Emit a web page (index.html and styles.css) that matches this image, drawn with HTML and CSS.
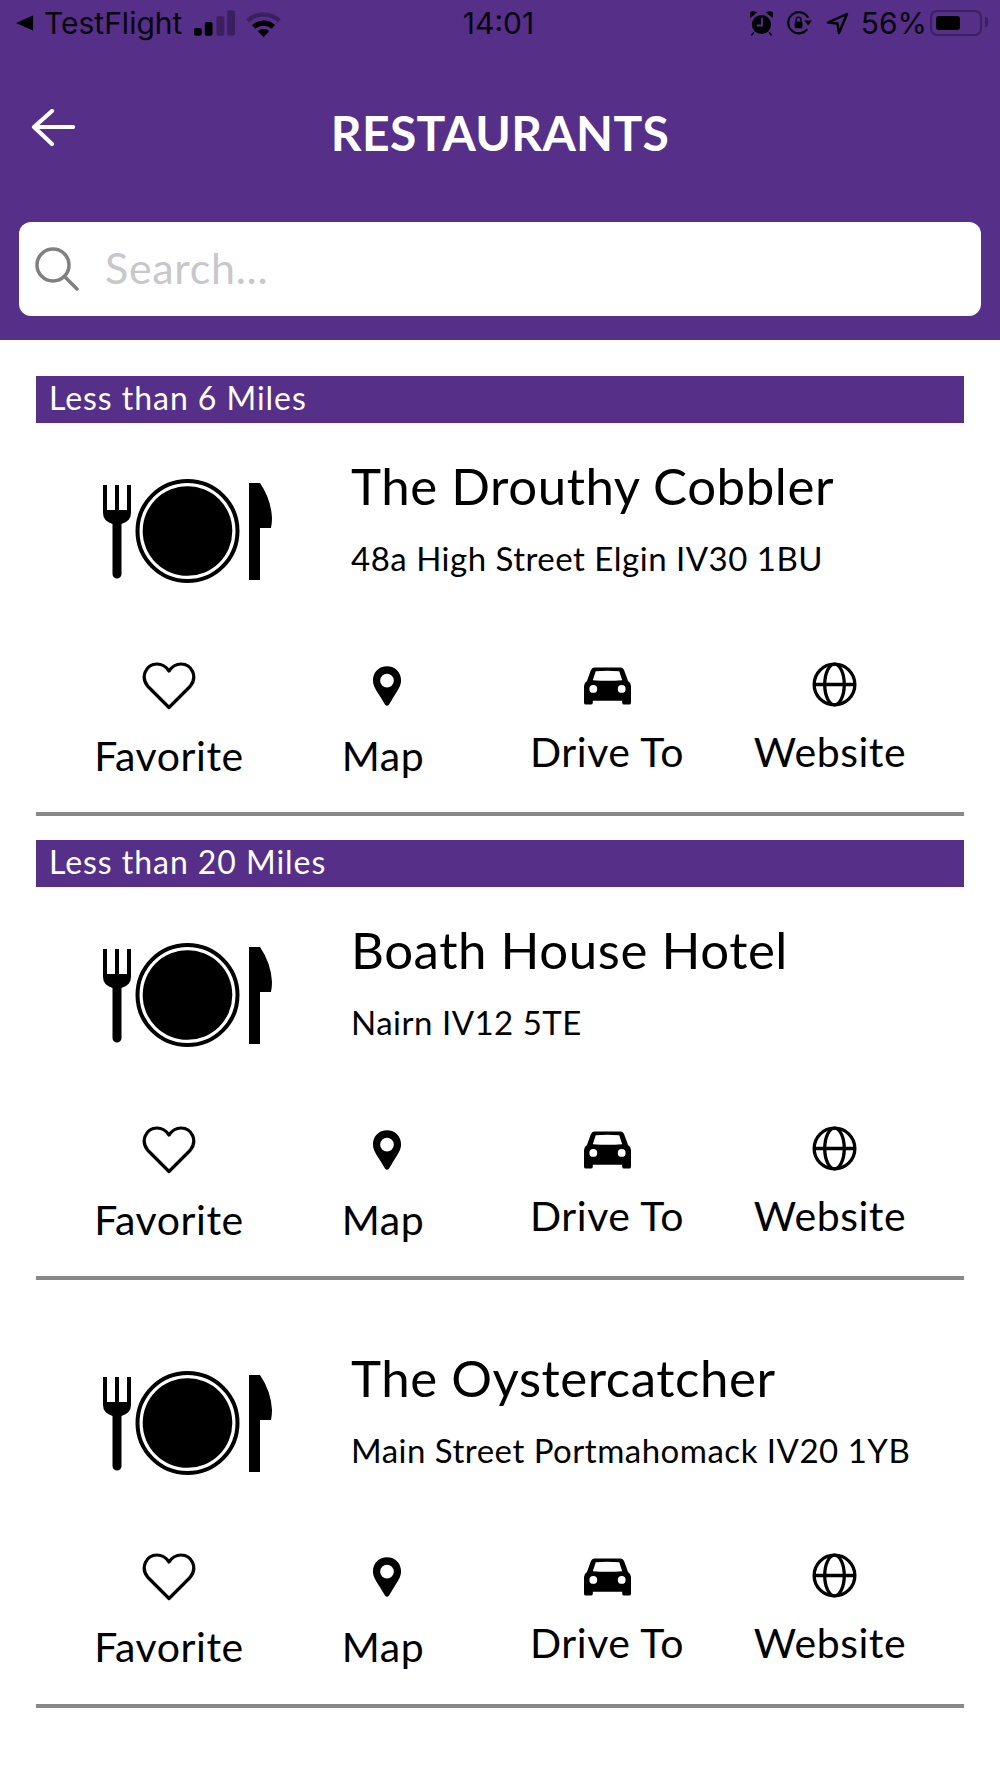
FILE: index.html
```html
<!DOCTYPE html>
<html lang="en">
<head>
    <meta charset="UTF-8">
    <meta name="viewport" content="width=device-width, initial-scale=1.0">
    <title>Restaurants</title>
    <link rel="stylesheet" href="styles.css">
</head>

<body>
    <svg class="sprites" width="0" height="0">
        <symbol id="i-dining" viewBox="0 0 170 110">
            <path d="M0 9h4v25h8V9h4v25h8V9h4v28q0 8-9.500 11v50a4.500 4.500 0 0 1-9 0V48Q0 45 0 37z"/>
            <circle cx="84.500" cy="55" r="50" fill="none" stroke="#000" stroke-width="4"/>
            <circle cx="84.500" cy="55" r="44.800"/>
            <path d="M146 7h11q11 16 12 35 0 5-1 10h-11v52h-11z"/>
        </symbol>
        <symbol id="i-heart" viewBox="0 0 54 48">
            <path d="M27 45.500 6 24.500C-2 15 4 2 15 2c5 0 9 2.500 12 7 3-4.500 7-7 12-7 11 0 17 13 9 22.500z" fill="none" stroke="#000" stroke-width="3.200" stroke-linejoin="round"/>
        </symbol>
        <symbol id="i-pin" viewBox="0 0 32 44">
            <path fill-rule="evenodd" d="M16 1C7.500 1 1 7.500 1 16c0 6 4 11 7 16l6 10q2 2 4 0l6-10c3-5 7-10 7-16C31 7.500 24.500 1 16 1zm0 8a7.300 7.300 0 1 1 0 14.600A7.300 7.300 0 0 1 16 9z"/>
        </symbol>
        <symbol id="i-car" viewBox="0 0 48 40">
            <path fill-rule="evenodd" d="M11 1h26q3 0 4 3l4 11q3 2 3 5v17q0 2-2 2h-5q-2 0-2-2v-2H9v2q0 2-2 2H2q-2 0-2-2V20q0-3 3-5L7 4q1-3 4-3zm1 4-3 9q15 1.500 30 0l-3-9q-12-1-24 0zM9.500 19a4 4 0 1 0 0 8 4 4 0 0 0 0-8zm29 0a4 4 0 1 0 0 8 4 4 0 0 0 0-8z"/>
        </symbol>
        <symbol id="i-globe" viewBox="0 0 46 46">
            <g fill="none" stroke="#000" stroke-width="3.400">
                <circle cx="23" cy="23" r="20.800"/>
                <ellipse cx="23" cy="23" rx="10" ry="20.800"/>
                <path d="M2 23h42"/>
            </g>
        </symbol>
    </svg>

    <header class="topbar">
        <div class="status">
            <div class="status-left">
                <svg class="s-back" viewBox="0 0 20 18"><path d="M19 1v16L1 9z"/></svg>
                <span>TestFlight</span>
                <svg class="s-signal" viewBox="0 0 42 26">
                    <rect x="0" y="18" width="8" height="8" rx="2"/>
                    <rect x="11" y="12" width="8" height="14" rx="2"/>
                    <rect x="23" y="6" width="8" height="20" rx="2" opacity=".3"/>
                    <rect x="34" y="0" width="8" height="26" rx="2" opacity=".3"/>
                </svg>
                <svg class="s-wifi" viewBox="0 0 36 28">
                    <path d="M0 9.500a26 26 0 0 1 36 0l-3 3.500a22 22 0 0 0-30 0z" opacity=".3"/>
                    <path d="M6 15.500a18 18 0 0 1 24 0l-3.500 4a13 13 0 0 0-17 0z"/>
                    <path d="M12 22a9 9 0 0 1 12 0l-6 6z"/>
                </svg>
            </div>
            <div class="status-time">14:01</div>
            <div class="status-right">
                <svg class="s-alarm" viewBox="0 0 24 26">
                    <circle cx="12" cy="14" r="10"/>
                    <path d="M1 6 6 1.500Q1 0 0 3zM23 6l-5-4.500Q23 0 24 3zM4 22l-2.500 3.500M20 22l2.500 3.500" stroke="#000" stroke-width="1.500"/>
                    <path d="M12.500 7v8H7" fill="none" stroke="#552f88" stroke-width="2"/>
                </svg>
                <svg class="s-rotate" viewBox="0 0 26 26">
                    <path d="M21 19a11 11 0 1 1 1-12" fill="none" stroke="#000" stroke-width="2.200"/>
                    <path d="M18 10h8l-4 5z"/>
                    <rect x="8" y="11" width="8" height="7" rx="1"/>
                    <path d="M9.500 11V9a2.500 2.500 0 0 1 5 0v2" fill="none" stroke="#000" stroke-width="1.500"/>
                </svg>
                <svg class="s-arrow" viewBox="0 0 23 23"><path d="M21 2 2 10.500l9.500 1 1.500 9.500z" fill="none" stroke="#000" stroke-width="2.400" stroke-linejoin="round"/></svg>
                <span>56%</span>
                <div class="battery"><div class="battery-level"></div></div>
            </div>
        </div>

        <div class="titlebar">
            <svg class="back" viewBox="0 0 44 38"><path d="M42 18H3M21 2 3 18l18 17" fill="none" stroke="#fff" stroke-width="4.200" stroke-linecap="round" stroke-linejoin="round"/></svg>
            <h1>RESTAURANTS</h1>
        </div>

        <div class="search">
            <svg class="search-icon" viewBox="0 0 44 44"><circle cx="18" cy="18" r="16" fill="none" stroke="#808080" stroke-width="3.500"/><path d="m30 30 12 12" stroke="#808080" stroke-width="3.500" stroke-linecap="round"/></svg>
            <span class="search-text">Search...</span>
        </div>
    </header>

    <main class="list">
        <div class="band">Less than 6 Miles</div>
        <article class="place">
            <div class="info">
                <svg class="dining"><use href="#i-dining"/></svg>
                <div>
                    <h2>The Drouthy Cobbler</h2>
                    <p>48a High Street Elgin IV30 1BU</p>
                </div>
            </div>
            <div class="actions">
                <div class="action low"><svg class="ic-heart"><use href="#i-heart"/></svg><span>Favorite</span></div>
                <div class="action low"><svg class="ic-pin"><use href="#i-pin"/></svg><span>Map</span></div>
                <div class="action"><svg class="ic-car"><use href="#i-car"/></svg><span>Drive To</span></div>
                <div class="action"><svg class="ic-globe"><use href="#i-globe"/></svg><span>Website</span></div>
            </div>
        </article>

        <div class="band">Less than 20 Miles</div>
        <article class="place">
            <div class="info">
                <svg class="dining"><use href="#i-dining"/></svg>
                <div>
                    <h2>Boath House Hotel</h2>
                    <p>Nairn IV12 5TE</p>
                </div>
            </div>
            <div class="actions">
                <div class="action low"><svg class="ic-heart"><use href="#i-heart"/></svg><span>Favorite</span></div>
                <div class="action low"><svg class="ic-pin"><use href="#i-pin"/></svg><span>Map</span></div>
                <div class="action"><svg class="ic-car"><use href="#i-car"/></svg><span>Drive To</span></div>
                <div class="action"><svg class="ic-globe"><use href="#i-globe"/></svg><span>Website</span></div>
            </div>
        </article>

        <article class="place no-band">
            <div class="info">
                <svg class="dining"><use href="#i-dining"/></svg>
                <div>
                    <h2>The Oystercatcher</h2>
                    <p>Main Street Portmahomack IV20 1YB</p>
                </div>
            </div>
            <div class="actions">
                <div class="action low"><svg class="ic-heart"><use href="#i-heart"/></svg><span>Favorite</span></div>
                <div class="action low"><svg class="ic-pin"><use href="#i-pin"/></svg><span>Map</span></div>
                <div class="action"><svg class="ic-car"><use href="#i-car"/></svg><span>Drive To</span></div>
                <div class="action"><svg class="ic-globe"><use href="#i-globe"/></svg><span>Website</span></div>
            </div>
        </article>
    </main>
</body>

</html>
```

FILE: styles.css
```css
* {
    box-sizing: border-box;
}

body {
    margin: 0;
    background: #fff;
    color: #000;
    font-family: Lato, sans-serif;
}

.sprites {
    display: block;
    height: 0;
}

.topbar {
    height: 340px;
    background: #552f88;
    padding: 0 19px;
}

.status {
    display: grid;
    grid-template-columns: 1fr auto 1fr;
    align-items: center;
    height: 46px;
    margin: 0 -19px;
    padding: 0 18px 0 15px;
    font-family: Inter, sans-serif;
    font-size: 30px;
    color: #07040d;
}

.status svg {
    display: block;
    flex: none;
}

.status-left,
.status-right {
    display: flex;
    align-items: center;
}

.status-right {
    justify-content: flex-end;
}

.s-back {
    width: 19px;
    height: 18px;
    margin-right: 10px;
}

.s-signal {
    width: 41px;
    height: 26px;
    margin-left: 12px;
}

.s-wifi {
    width: 35px;
    height: 27px;
    margin-left: 11px;
}

.s-alarm {
    width: 23px;
    height: 25px;
}

.s-rotate {
    width: 25px;
    height: 25px;
    margin-left: 14px;
}

.s-arrow {
    width: 23px;
    height: 23px;
    margin-left: 14px;
    margin-right: 12px;
}

.battery {
    position: relative;
    width: 52px;
    height: 26px;
    margin-left: 3px;
    padding: 4px;
    border: 2px solid rgba(0, 0, 0, 0.3);
    border-radius: 7px;
}

.battery::after {
    content: "";
    position: absolute;
    top: 5px;
    right: -8px;
    width: 3px;
    height: 10px;
    border-radius: 0 3px 3px 0;
    background: rgba(0, 0, 0, 0.3);
}

.battery-level {
    width: 24px;
    height: 100%;
    border-radius: 3px;
    background: #000;
}

.titlebar {
    display: flex;
    align-items: center;
    justify-content: center;
    position: relative;
    height: 172px;
    margin-bottom: 4px;
}

.back {
    position: absolute;
    left: 12px;
    top: 63px;
    width: 44px;
    height: 38px;
}

h1 {
    margin: 0;
    font-size: 48px;
    font-weight: 700;
    letter-spacing: 0.35px;
    color: #fff;
}

.search {
    display: flex;
    align-items: center;
    height: 94px;
    padding-left: 16px;
    border-radius: 12px;
    background: #fff;
    font-size: 43px;
    letter-spacing: 0.7px;
    color: #c7c7cc;
}

.search-icon {
    width: 44px;
    height: 44px;
    margin-right: 26px;
}

.search-text {
    margin-bottom: 4px;
}

.list {
    padding: 36px 36px 0;
}

.band {
    height: 47px;
    padding-left: 13px;
    background: #552f88;
    color: #fff;
    font-size: 32px;
    letter-spacing: 0.95px;
    line-height: 43px;
}

.place {
    height: 393px;
    margin-bottom: 24px;
    border-bottom: 4px solid #888;
}

.place.no-band {
    margin-top: -24px;
    height: 428px;
}

.no-band .info {
    height: 273px;
    padding-top: 63px;
}

.info {
    display: flex;
    height: 239px;
    padding: 28px 0 0 67px;
}

.dining {
    width: 170px;
    height: 110px;
    margin: 25px 78px 0 0;
}

h2 {
    margin: 0;
    font-size: 51px;
    font-weight: 400;
    letter-spacing: 0.55px;
    line-height: 70px;
}

.info p {
    margin: 17px 0 0;
    font-size: 33px;
    letter-spacing: 0.5px;
    line-height: 40px;
}

.actions {
    display: grid;
    grid-template-columns: 220px 208px 240px 206px;
    padding-left: 23px;
}

.action {
    display: flex;
    flex-direction: column;
    align-items: center;
    font-size: 41px;
    letter-spacing: 0.55px;
    line-height: 50px;
}

.action svg {
    height: 48px;
    margin-bottom: 17px;
}

.action.low svg {
    margin-bottom: 21px;
}

.ic-heart {
    width: 54px;
}

.ic-pin {
    width: 30px;
    margin-left: 7px;
}

.action .ic-car {
    width: 47px;
    height: 40px;
    margin-top: 4px;
    margin-bottom: 21px;
}

.action .ic-globe {
    width: 45px;
    height: 45px;
    margin-left: 9px;
    margin-bottom: 20px;
}
```
